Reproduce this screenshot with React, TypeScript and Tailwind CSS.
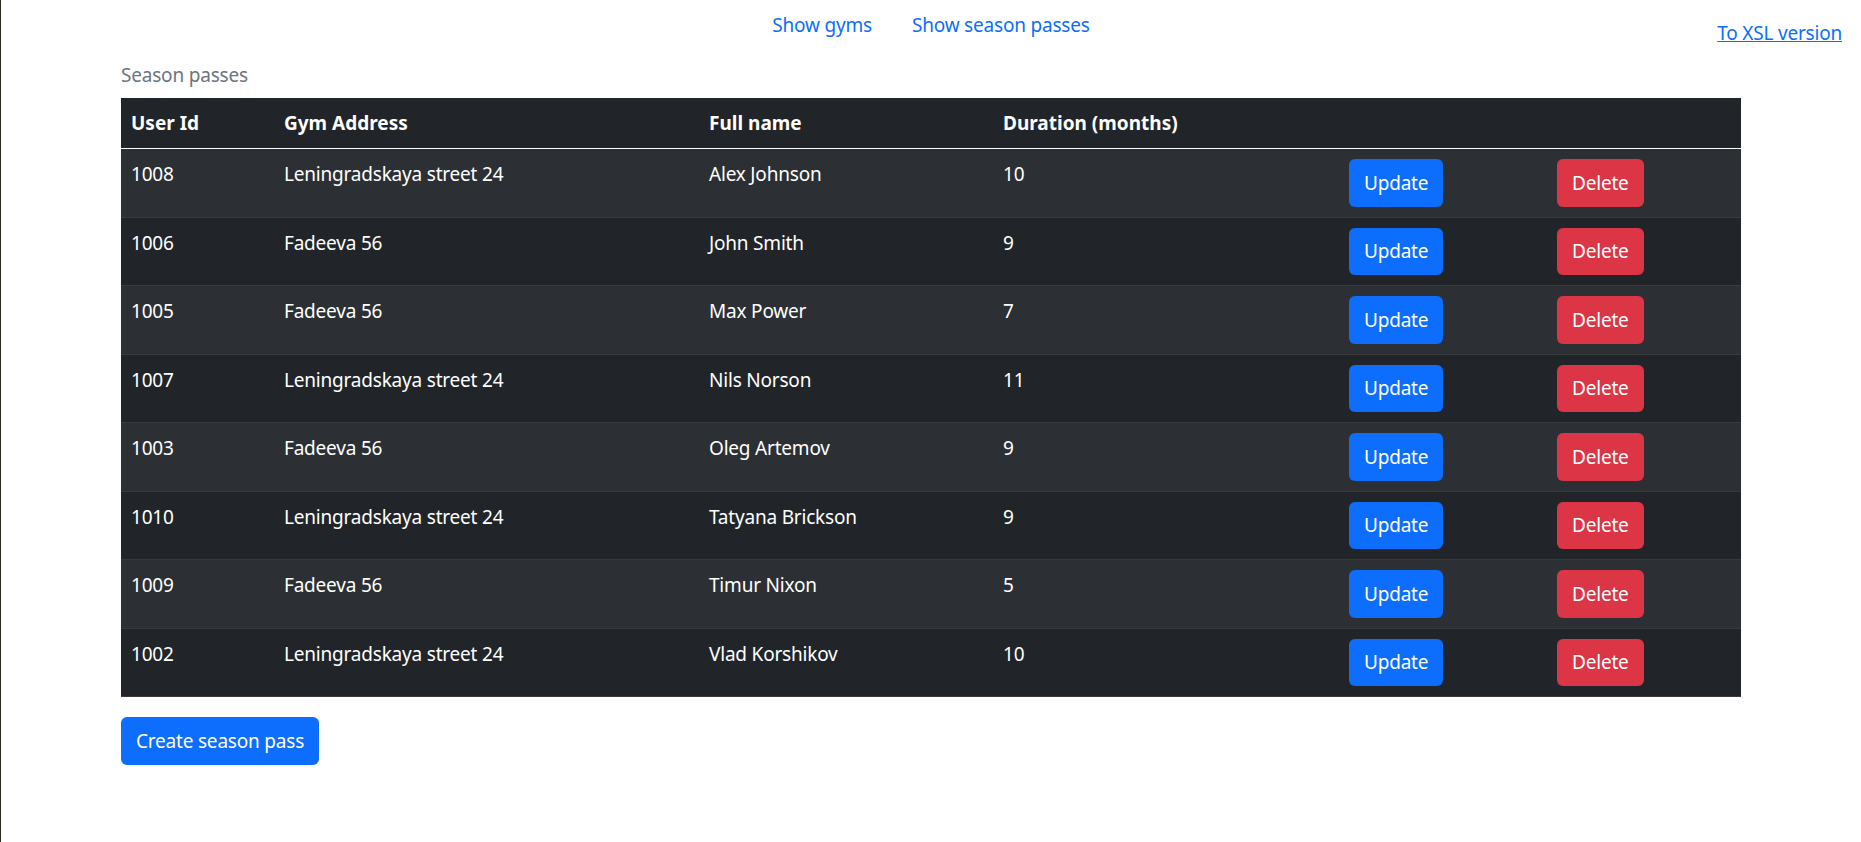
const rows: [string, string, string, string][] = [
  ["1008", "Leningradskaya street 24", "Alex Johnson", "10"],
  ["1006", "Fadeeva 56", "John Smith", "9"],
  ["1005", "Fadeeva 56", "Max Power", "7"],
  ["1007", "Leningradskaya street 24", "Nils Norson", "11"],
  ["1003", "Fadeeva 56", "Oleg Artemov", "9"],
  ["1010", "Leningradskaya street 24", "Tatyana Brickson", "9"],
  ["1009", "Fadeeva 56", "Timur Nixon", "5"],
  ["1002", "Leningradskaya street 24", "Vlad Korshikov", "10"],
];

export default function App() {
  return (
    <div className="min-h-[842px] bg-white border-l border-[#2e2a1c] font-['Noto_Sans',sans-serif] text-[19px] tracking-[-0.2px] leading-[30px] text-[#212529]">
      <div className="grid grid-cols-[1fr_auto_1fr]">
        <div />
        <nav className="flex">
          <a className="px-[20px] py-[10px] text-[#0d6efd] cursor-pointer">Show gyms</a>
          <a className="px-[20px] py-[10px] text-[#0d6efd] cursor-pointer">Show season passes</a>
        </nav>
        <div className="flex justify-end items-start pt-[18px] pr-[19px]">
          <a className="underline text-[#0d6efd] cursor-pointer">To XSL version</a>
        </div>
      </div>
      <div className="px-[120px]">
        <div className="pt-[10px] pb-[8px] text-[#6c757d]">Season passes</div>
        <table className="w-full table-fixed border-collapse bg-[#212529] text-white">
          <colgroup>
            <col className="w-[153px]" />
            <col className="w-[425px]" />
            <col className="w-[294px]" />
            <col className="w-[346px]" />
            <col className="w-[208px]" />
            <col className="w-[194px]" />
          </colgroup>
          <thead>
            <tr className="border-b border-white">
              <th className="p-[10px] text-left font-bold tracking-normal">User Id</th>
              <th className="p-[10px] text-left font-bold tracking-normal">Gym Address</th>
              <th className="p-[10px] text-left font-bold tracking-normal">Full name</th>
              <th className="p-[10px] text-left font-bold tracking-normal">Duration (months)</th>
              <th className="p-[10px]" />
              <th className="p-[10px]" />
            </tr>
          </thead>
          <tbody>
            {rows.map((r, i) => (
              <tr
                key={r[0]}
                className={`border-b border-[#373b3e] ${i % 2 === 0 ? "bg-[#2c3034]" : "bg-[#212529]"}`}
              >
                <td className="p-[10px] align-top">{r[0]}</td>
                <td className="p-[10px] align-top">{r[1]}</td>
                <td className="p-[10px] align-top">{r[2]}</td>
                <td className="p-[10px] align-top">{r[3]}</td>
                <td className="p-[10px] align-top">
                  <button className="h-[47.5px] px-[15px] rounded-[6px] bg-[#0d6efd] text-white">Update</button>
                </td>
                <td className="p-[10px] align-top">
                  <button className="h-[47.5px] px-[15px] rounded-[6px] bg-[#dc3545] text-white">Delete</button>
                </td>
              </tr>
            ))}
          </tbody>
        </table>
        <button className="mt-[20px] h-[47.5px] px-[15px] rounded-[6px] bg-[#0d6efd] text-white">Create season pass</button>
      </div>
    </div>
  );
}
